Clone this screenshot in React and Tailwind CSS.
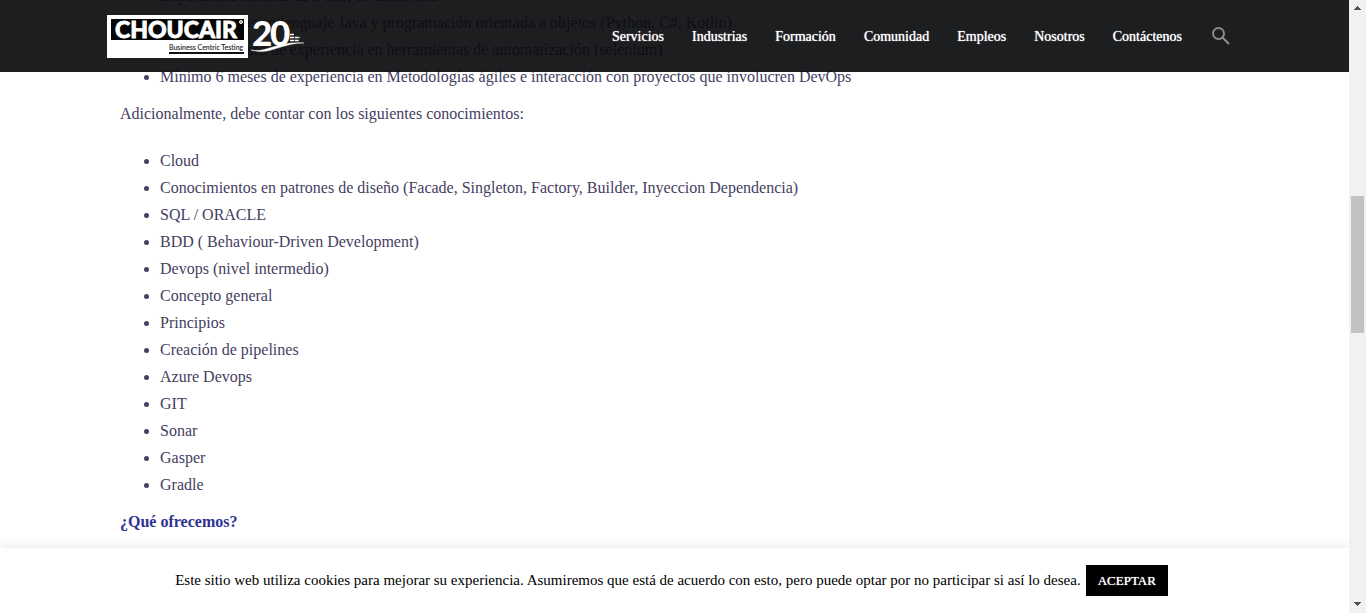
import React from "react";

const requirements = [
  "Experiencia mínima de 1 año, en desarrollo",
  "Conocimientos en lenguaje Java y programación orientada a objetos (Python, C#, Kotlin)",
  "Mínimo 6 meses de experiencia en herramientas de automatización (selenium)",
  "Mínimo 6 meses de experiencia en Metodologías ágiles e interacción con proyectos que involucren DevOps",
];

const knowledge = [
  "Cloud",
  "Conocimientos en patrones de diseño (Facade, Singleton, Factory, Builder, Inyeccion Dependencia)",
  "SQL / ORACLE",
  "BDD ( Behaviour-Driven Development)",
  "Devops (nivel intermedio)",
  "Concepto general",
  "Principios",
  "Creación de pipelines",
  "Azure Devops",
  "GIT",
  "Sonar",
  "Gasper",
  "Gradle",
];

const links = ["Servicios", "Industrias", "Formación", "Comunidad", "Empleos", "Nosotros", "Contáctenos"];

function Logo() {
  return (
    <svg width="198" height="44" viewBox="0 0 198 44" role="img" aria-label="Choucair Business Centric Testing">
      <rect width="141" height="43" fill="#fff" />
      <rect x="4" y="4" width="133" height="21" fill="#050505" />
      <text x="8" y="23" fontSize="23" fontWeight="900" fill="#fff" stroke="#fff" strokeWidth="0.8" fontFamily="Lato, sans-serif">CHOUCAIR</text>
      <circle cx="134" cy="7" r="1.5" fill="#777" stroke="#fff" />
      <text x="62" y="35" fontSize="7" fill="#222" stroke="#222" strokeWidth="0.1" fontFamily="Lato, sans-serif">Business Centric Testing</text>
      <path d="M62 38h75" stroke="#111" strokeWidth="2" />
      <text x="145" y="31" fontSize="35" fontWeight="900" fill="#fff" fontFamily="Lato, sans-serif">2</text>
      <text x="163" y="31" fontSize="35" fontWeight="900" fill="#fff" fontFamily="Lato, sans-serif">0</text>
      <path d="M144 35C160 38 170 26 197 28C174 28 162 41 144 35Z" fill="#fff" stroke="#fff" strokeWidth="0.4" />
      <path d="M183 19.500h4M183 22.500h10M183 25.500h9" stroke="#fff" strokeWidth="1.500" strokeDasharray="4 .7" />
    </svg>
  );
}

function List({ items }) {
  return (
    <ul className="mb-[10px] list-disc pl-10">
      {items.map((item) => (
        <li key={item}>{item}</li>
      ))}
    </ul>
  );
}

export default function App() {
  return (
    <div className="flex h-screen overflow-hidden bg-white font-['Liberation_Serif',serif]">
      <div className="relative min-w-0 flex-1 overflow-hidden">
        <main className="-mt-[18px] px-[120px] text-base leading-[27px] text-[#45405f]">
          <List items={requirements} />
          <p className="mb-5">Adicionalmente, debe contar con los siguientes conocimientos:</p>
          <List items={knowledge} />
          <h2 className="font-bold text-[#2e3192]">¿Qué ofrecemos?</h2>
        </main>

        <header className="absolute inset-x-0 top-0 flex h-[72px] items-center justify-between bg-[#0a0b0d]/92 pt-0.5 pr-[119px] pl-[107px]">
          <a href="#inicio" aria-label="Choucair">
            <Logo />
          </a>
          <nav className="flex items-center gap-7 text-sm text-white antialiased [text-shadow:0_0_1px_#fff]">
            {links.map((label) => (
              <a key={label} href="#menu">{label}</a>
            ))}
            <button type="button" aria-label="Buscar" className="text-[#8b8b8b]">
              <svg width="20" height="20" viewBox="0 0 20 20" fill="none" stroke="currentColor" strokeWidth="2">
                <circle cx="8.500" cy="6.500" r="5.500" />
                <path d="M12.500 10.500L19 17" strokeWidth="2.200" />
              </svg>
            </button>
          </nav>
        </header>

        <aside className="absolute inset-x-0 bottom-0 flex h-[65px] items-center justify-center gap-[5px] bg-white pr-[6px] text-[15px] text-black shadow-[0_-1px_10px_rgba(172,171,171,0.3)]">
          <p>
            Este sitio web utiliza cookies para mejorar su experiencia. Asumiremos que está de acuerdo con esto, pero puede optar por no participar si así lo desea.
          </p>
          <button type="button" className="bg-black px-3 py-[5px] text-[13px] leading-[21px] text-white antialiased [text-shadow:0_0_1px_#fff]">ACEPTAR</button>
        </aside>
      </div>

      <div aria-hidden="true" className="flex w-[17px] shrink-0 flex-col items-center justify-between bg-[#f1f1f1] py-[6px]">
        <svg width="7" height="5" viewBox="0 0 7 5" fill="#505050"><path d="M3 0h1v1h1v1h1v1h1v1H0V3h1V2h1V1h1z" /></svg>
        <div className="flex w-full flex-1 flex-col items-center">
          <div className="grow-[185]" />
          <div className="w-[13px] grow-[137] bg-[#c1c1c1]" />
          <div className="grow-[269]" />
        </div>
        <svg width="7" height="5" viewBox="0 0 7 5" fill="#505050"><path d="M0 0h7v1H6v1H5v1H4v1H3V3H2V2H1V1H0z" /></svg>
      </div>
    </div>
  );
}
